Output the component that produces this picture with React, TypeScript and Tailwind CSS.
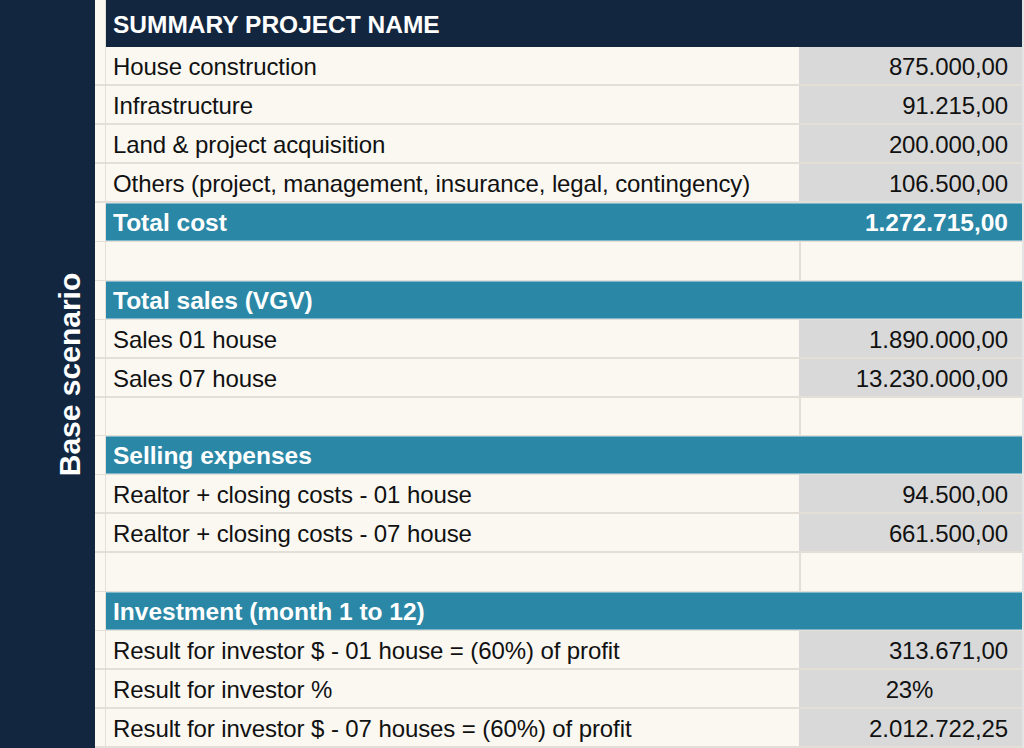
import React from "react";

type Row =
  | { kind: "item"; label: string; value: string; center?: boolean }
  | { kind: "total"; label: string; value: string }
  | { kind: "section"; label: string }
  | { kind: "blank" };

const rows: Row[] = [
  { kind: "item", label: "House construction", value: "875.000,00" },
  { kind: "item", label: "Infrastructure", value: "91.215,00" },
  { kind: "item", label: "Land & project acquisition", value: "200.000,00" },
  { kind: "item", label: "Others (project, management, insurance, legal, contingency)", value: "106.500,00" },
  { kind: "total", label: "Total cost", value: "1.272.715,00" },
  { kind: "blank" },
  { kind: "section", label: "Total sales (VGV)" },
  { kind: "item", label: "Sales 01 house", value: "1.890.000,00" },
  { kind: "item", label: "Sales 07 house", value: "13.230.000,00" },
  { kind: "blank" },
  { kind: "section", label: "Selling expenses" },
  { kind: "item", label: "Realtor + closing costs - 01 house", value: "94.500,00" },
  { kind: "item", label: "Realtor + closing costs - 07 house", value: "661.500,00" },
  { kind: "blank" },
  { kind: "section", label: "Investment (month 1 to 12)" },
  { kind: "item", label: "Result for investor $ - 01 house = (60%) of profit", value: "313.671,00" },
  { kind: "item", label: "Result for investor %", value: "23%", center: true },
  { kind: "item", label: "Result for investor $ - 07 houses = (60%) of profit", value: "2.012.722,25" },
];

function TableRow({ row }: { row: Row }) {
  const gap = <div className="w-[11px] shrink-0 border-r border-[#e3dfd6] bg-[#faf8f1]" />;
  if (row.kind === "total" || row.kind === "section") {
    return (
      <div className="flex h-[39px] border-b border-[#e3dfd6]">
        {gap}
        <div className="flex flex-1 items-center justify-between border-y border-[#7fb8cc] bg-[#2b87a6] pl-[7px] pr-[14px] pt-[3px] text-[24.5px] font-bold text-white">
          <span>{row.label}</span>
          {row.kind === "total" && <span>{row.value}</span>}
        </div>
      </div>
    );
  }
  if (row.kind === "blank") {
    return (
      <div className="flex h-[39px] border-b border-[#e3dfd6] bg-[#faf8f1]">
        {gap}
        <div className="flex-1" />
        <div className="w-[223px] shrink-0 border-l-2 border-[#e3dfd6]" />
      </div>
    );
  }
  return (
    <div className="flex h-[39px] border-b-2 border-[#e3dfd6] text-[24px] tracking-[-0.1px] text-[#111]">
      {gap}
      <div className="flex flex-1 items-center whitespace-nowrap bg-[#faf8f1] pl-[7px] pt-[3px]">{row.label}</div>
      <div className={`flex w-[223px] shrink-0 items-center bg-[#d9d9d9] pt-[3px] ${row.center ? "justify-center pr-[2px]" : "justify-end pr-[14px]"}`}>
        {row.value}
      </div>
    </div>
  );
}

export default function App() {
  return (
    <div className="flex h-[748px] w-[1024px] overflow-hidden bg-[#e4e4e4] font-['Liberation_Sans',Arial,sans-serif]">
      <div className="flex w-[95px] shrink-0 items-center justify-center bg-[#12273f] pl-[44px]">
        <span className="-rotate-90 whitespace-nowrap text-[30px] font-bold text-white">Base scenario</span>
      </div>
      <div className="mr-[2px] flex flex-1 flex-col">
        <div className="flex h-[47px] shrink-0">
          <div className="w-[11px] shrink-0 border-r border-[#e3dfd6] bg-[#faf8f1]" />
          <div className="flex flex-1 items-center bg-[#12273f] pl-[7px] pt-[3px] text-[24.5px] font-bold text-white">SUMMARY PROJECT NAME</div>
        </div>
        {rows.map((r, i) => (
          <TableRow key={i} row={r} />
        ))}
      </div>
    </div>
  );
}
